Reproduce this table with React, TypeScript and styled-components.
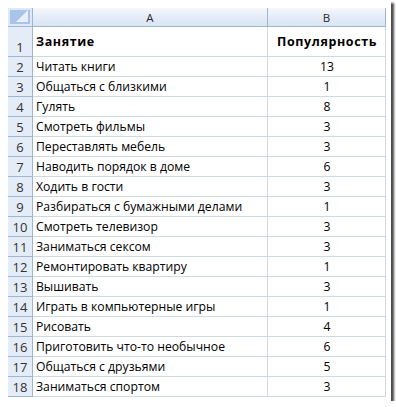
import React from "react";
import styled, { createGlobalStyle } from "styled-components";

const Global = createGlobalStyle`
  html, body { margin: 0; padding: 0; background: #fff; }
  body { font-family: "Open Sans", "Liberation Sans", sans-serif; }
`;

const Frame = styled.div`
  width: 391px;
  height: 401px;
  box-sizing: border-box;
  background: #fff;
  padding: 8px 0 0 8px;
  box-shadow: 3px 3px 2px rgba(0, 0, 0, 0.7);
`;

const Sheet = styled.div`
  display: grid;
  grid-template-columns: 25px 235px 118px;
  grid-template-rows: 19px 30px repeat(17, 20px);
  width: 378px;
`;

const Corner = styled.div`
  background: #dfe8f4;
  border-right: 1px solid #9eb6ce;
  border-bottom: 1px solid #9eb6ce;
  box-sizing: border-box;
  position: relative;
  &::before {
    content: "";
    position: absolute;
    left: 2px;
    top: 2px;
    right: 2px;
    bottom: 2px;
    background: #a9c4e9;
  }
  &::after {
    content: "";
    position: absolute;
    right: 4px;
    bottom: 4px;
    width: 0;
    height: 0;
    border-left: 12px solid transparent;
    border-bottom: 12px solid #e9eff8;
  }
`;

const ColHead = styled.div`
  background: linear-gradient(#f5f8fc, #e4ecf7 50%, #dae5f3);
  border-right: 1px solid #9eb6ce;
  border-bottom: 1px solid #9eb6ce;
  box-sizing: border-box;
  display: flex;
  align-items: center;
  justify-content: center;
  font-family: "Open Sans", sans-serif;
  font-size: 11.5px;
  color: #2a2a2a;
  padding-top: 1px;
`;

const RowHead = styled.div`
  background: #e4ecf7;
  border-right: 1px solid #9eb6ce;
  border-bottom: 1px solid #9eb6ce;
  box-sizing: border-box;
  display: flex;
  align-items: flex-end;
  justify-content: center;
  font-family: "Open Sans", sans-serif;
  font-size: 13px;
  color: #333;
  padding-bottom: 1px;
  line-height: 16px;
`;

const Cell = styled.div<{ $bold?: boolean; $center?: boolean }>`
  background: #fff;
  border-right: 1px solid #d0d7e5;
  border-bottom: 1px solid #d0d7e5;
  box-sizing: border-box;
  display: flex;
  align-items: flex-end;
  justify-content: ${(p) => (p.$center ? "center" : "flex-start")};
  padding: ${(p) => (p.$bold ? "0 2px 6px 3px" : "0 2px 1px 3px")};
  font-family: "Open Sans", sans-serif;
  font-size: ${(p) => (p.$bold ? "12.5px" : "12.2px")};
  letter-spacing: ${(p) => (p.$bold ? "0.6px" : "0")};
  font-weight: ${(p) => (p.$bold ? 700 : 400)};
  color: #000;
  white-space: nowrap;
  overflow: hidden;
  line-height: 16px;
`;

const rows: [string, number][] = [
  ["Читать книги", 13],
  ["Общаться с близкими", 1],
  ["Гулять", 8],
  ["Смотреть фильмы", 3],
  ["Переставлять мебель", 3],
  ["Наводить порядок в доме", 6],
  ["Ходить в гости", 3],
  ["Разбираться с бумажными делами", 1],
  ["Смотреть телевизор", 3],
  ["Заниматься сексом", 3],
  ["Ремонтировать квартиру", 1],
  ["Вышивать", 3],
  ["Играть в компьютерные игры", 1],
  ["Рисовать", 4],
  ["Приготовить что-то необычное", 6],
  ["Общаться с друзьями", 5],
  ["Заниматься спортом", 3],
];

export default function App() {
  return (
    <>
      <Global />
      <Frame>
        <Sheet>
          <Corner />
          <ColHead>A</ColHead>
          <ColHead>B</ColHead>
          <RowHead>1</RowHead>
          <Cell $bold>Занятие</Cell>
          <Cell $bold $center>Популярность</Cell>
          {rows.map(([name, n], i) => (
            <React.Fragment key={i}>
              <RowHead>{i + 2}</RowHead>
              <Cell>{name}</Cell>
              <Cell $center>{n}</Cell>
            </React.Fragment>
          ))}
        </Sheet>
      </Frame>
    </>
  );
}
